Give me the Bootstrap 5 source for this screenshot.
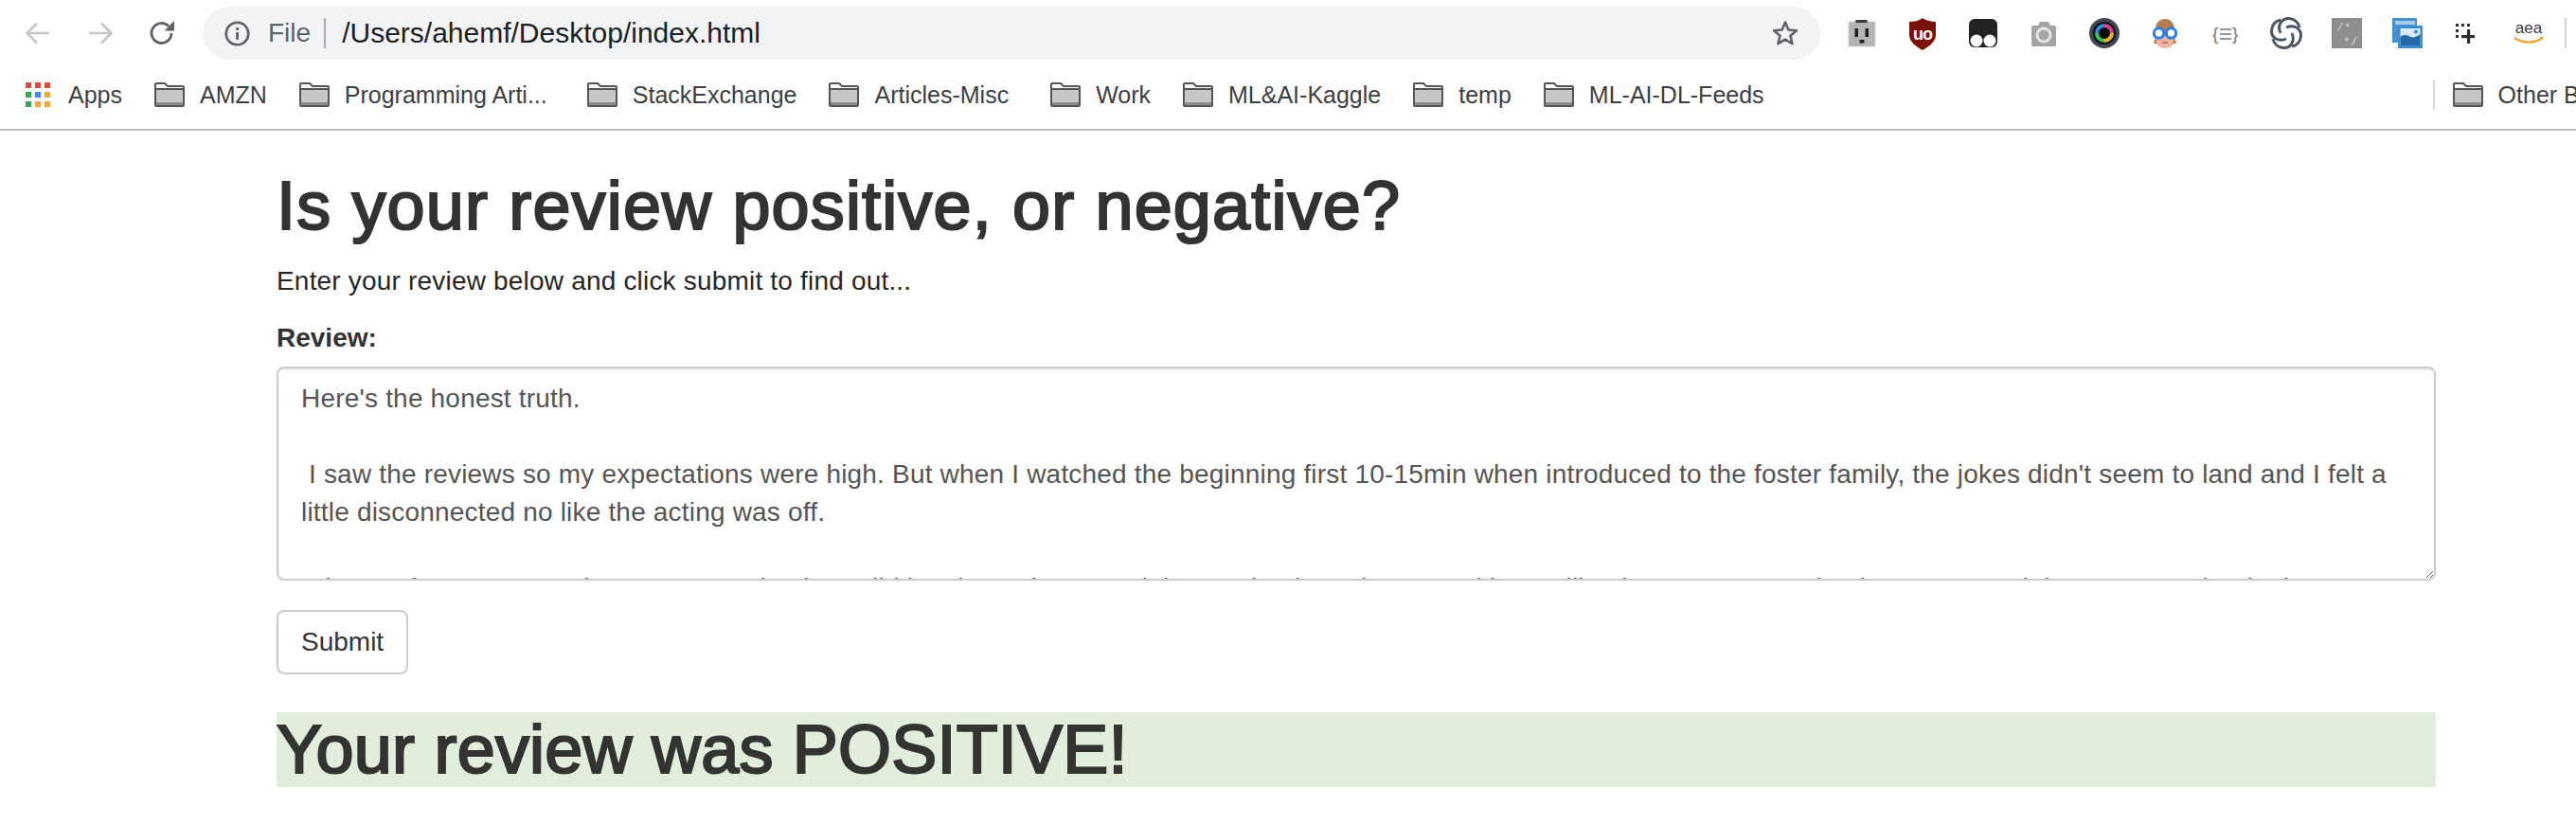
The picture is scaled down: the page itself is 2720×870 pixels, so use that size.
<!DOCTYPE html>
<html lang="en">
<head>
  <meta charset="UTF-8" />
  <title>Is your review positive, or negative?</title>
  <link href="https://cdn.jsdelivr.net/npm/bootstrap@5.3.2/dist/css/bootstrap.min.css" rel="stylesheet">
  <style>
    html, body { height: 870px; overflow: hidden; }
    body {
      background: #fff;
      color: #333;
      font-family: "Liberation Sans", Arial, sans-serif;
      font-size: 28px;
      line-height: 40px;
    }
    .chrome-top { height: 70px; padding-left: 26px; }
    .nav-ico { width: 28px; height: 28px; flex: none; }
    .nav-fwd { margin-left: 38px; }
    .nav-reload { margin-left: 37px; }
    .addr-bar {
      width: 1708px;
      height: 56px;
      margin-left: 29px;
      padding-left: 23px;
      padding-right: 22px;
      background: #f1f3f4;
      border-radius: 28px;
      flex: none;
      font-size: 30px;
      line-height: 56px;
    }
    .addr-file { color: #5f6368; font-size: 28px; margin-left: 19px; }
    .addr-sep { width: 2px; height: 32px; background: #a9abae; margin: 0 17px 0 14px; }
    .addr-path { color: #202124; }
    .ext-row { margin-left: 20px; gap: 16px; }
    .ext-ico { width: 48px; height: 48px; flex: none; }
    .ext-sep { width: 2px; height: 32px; background: #d4d4d4; margin-left: -2px; flex: none; }
    .bm-bar {
      height: 68px;
      padding-left: 27px;
      padding-bottom: 6px;
      border-bottom: 2px solid #bcbcbc;
      font-size: 25px;
      color: #3c4043;
      white-space: nowrap;
      overflow: hidden;
    }
    .bm-apps { width: 26px; height: 26px; margin-right: 19px; flex: none; }
    .bm-item { margin-left: 34px; flex: none; }
    .bm-after-elided { margin-left: 42px; }
    .bm-after-articles { margin-left: 44px; }
    .bm-folder { width: 32px; height: 26px; margin-right: 16px; flex: none; }
    .bm-apps-label { flex: none; }
    .bm-sep { width: 2px; height: 32px; background: #d9d9d9; margin-left: 706px; flex: none; }
    .bm-other { margin-left: 19px; }
    .page-col { width: 2340px; margin-left: 262px; padding: 0 30px; }
    .big-title {
      font-family: "Liberation Sans", Arial, sans-serif;
      font-size: 72px;
      font-weight: 400;
      line-height: 79px;
      color: #333;
      -webkit-text-stroke: 2.2px #333;
      margin: 40px 0 20px;
    }
    .title-main { letter-spacing: 1.15px; }
    .intro { margin: 0 0 20px; color: #262626; letter-spacing: .19px; }
    .review-label { font-weight: 700; margin-bottom: 10px; display: block; }
    .review-box {
      height: 226px;
      padding: 12px 24px;
      font-size: 28px;
      letter-spacing: .19px;
      line-height: 40px;
      color: #555;
      border: 2px solid #ccc;
      border-radius: 8px;
      box-shadow: inset 0 2px 2px rgba(0,0,0,.075);
      scrollbar-width: none;
    }
    .review-group { margin-bottom: 31px; }
    .submit-btn {
      font-size: 28px;
      line-height: 40px;
      padding: 12px 24px;
      color: #333;
      background: #fff;
      border: 2px solid #ccc;
      border-radius: 8px;
    }
    .result-good { background: #e1eedb; letter-spacing: .2px; }
  </style>
</head>
<body>
  <div class="chrome-top d-flex align-items-center">
    <svg class="nav-ico" viewBox="0 0 28 28" fill="none" stroke="#c4c6c9" stroke-width="2.6"><path d="M26 14H3M13 3.5 2.5 14 13 24.5"/></svg>
    <svg class="nav-ico nav-fwd" viewBox="0 0 28 28" fill="none" stroke="#c4c6c9" stroke-width="2.6"><path d="M2 14h23M15 3.5 25.500 14 15 24.500"/></svg>
    <svg class="nav-ico nav-reload" viewBox="0 0 28 28"><path d="M24 14a10.500 10.500 0 1 1-3-7.400" fill="none" stroke="#5f6368" stroke-width="2.800"/><path d="M27 1v10.500H16.500z" fill="#5f6368"/></svg>
    <div class="addr-bar d-flex align-items-center">
      <svg width="27" height="27" viewBox="0 0 27 27" class="flex-none"><circle cx="13.500" cy="13.500" r="11.800" fill="none" stroke="#5f6368" stroke-width="2.600"/><rect x="12.200" y="12" width="2.800" height="8" fill="#5f6368"/><rect x="12.200" y="7" width="2.800" height="3" fill="#5f6368"/></svg>
      <span class="addr-file">File</span>
      <span class="addr-sep"></span>
      <span class="addr-path">/Users/ahemf/Desktop/index.html</span>
      <svg class="ms-auto" width="30" height="30" viewBox="0 0 30 30"><path d="M15 3.500l3.400 8 8.600.700-6.500 5.600 2 8.400L15 21.700l-7.500 4.500 2-8.400L3 12.200l8.600-.700z" fill="none" stroke="#5f6368" stroke-width="2.600" stroke-linejoin="round"/></svg>
    </div>
    <div class="ext-row d-flex align-items-center">
      <!-- outlet -->
      <svg class="ext-ico" viewBox="0 0 48 48"><rect x="10" y="12" width="28" height="26" fill="#b4b4b4" stroke="#d0d0d0" stroke-width="1"/><rect x="17" y="10" width="13" height="3" rx="1.500" fill="#3a3a3a"/><rect x="16.500" y="19" width="3.500" height="9" fill="#1d1d1d"/><rect x="27.500" y="19" width="3.500" height="9" fill="#1d1d1d"/><rect x="21.500" y="31" width="5" height="3.500" fill="#1d1d1d"/></svg>
      <!-- ublock -->
      <svg class="ext-ico" viewBox="0 0 48 48"><path d="M24 8c4 3 9 4 14 4v14c0 7-7 12-14 16-7-4-14-9-14-16V12c5 0 10-1 14-4z" fill="#7b1208"/><text x="24" y="31" text-anchor="middle" font-family="Liberation Sans" font-weight="700" font-size="18" letter-spacing="-1" fill="#fff">uo</text></svg>
      <!-- tampermonkey -->
      <svg class="ext-ico" viewBox="0 0 48 48"><rect x="9" y="9" width="30" height="30" rx="6" fill="#222"/><circle cx="17" cy="32" r="6.500" fill="#fff"/><circle cx="31" cy="32" r="6.500" fill="#fff"/></svg>
      <!-- camera -->
      <svg class="ext-ico" viewBox="0 0 48 48"><path d="M11 18a2 2 0 0 1 2-2h5l2-4h9l2 4h4a2 2 0 0 1 2 2v18a2 2 0 0 1-2 2H13a2 2 0 0 1-2-2z" fill="#a4a4a4"/><circle cx="24" cy="26" r="7" fill="none" stroke="#e4e4e4" stroke-width="3"/></svg>
      <!-- lens -->
      <svg class="ext-ico" viewBox="0 0 48 48"><circle cx="24" cy="24" r="16" fill="#414752"/><circle cx="24" cy="24" r="12" fill="#111"/><g fill="none" stroke-width="4"><path d="M24 16a8 8 0 0 1 8 8" stroke="#d9408f"/><path d="M32 24a8 8 0 0 1-8 8" stroke="#e6b52c"/><path d="M24 32a8 8 0 0 1-8-8" stroke="#3cbf58"/><path d="M16 24a8 8 0 0 1 8-8" stroke="#2f8ee0"/></g><circle cx="24" cy="24" r="4" fill="#050505"/></svg>
      <!-- girl with goggles -->
      <svg class="ext-ico" viewBox="0 0 48 48"><path d="M12 35c2-4 2-9 2-14 0-8 4-12 10-12s10 4 10 12c0 5 0 10 2 14z" fill="#b07d55"/><path d="M15 26h18v6c0 5-4 8-9 8s-9-3-9-8z" fill="#eeb4a0"/><circle cx="17.500" cy="24" r="5.200" fill="#fff" stroke="#2f7fe0" stroke-width="3"/><circle cx="30.500" cy="24" r="5.200" fill="#fff" stroke="#2f7fe0" stroke-width="3"/><path d="M22 24h4" stroke="#2f7fe0" stroke-width="2"/><path d="M21 34h6" stroke="#a86b5c" stroke-width="1.500"/></svg>
      <!-- json formatter -->
      <svg class="ext-ico" viewBox="0 0 48 48"><text x="10" y="31" font-family="Liberation Sans" font-size="19" fill="#777">{</text><text x="31" y="31" font-family="Liberation Sans" font-size="19" fill="#777">}</text><path d="M18 20h12M18 25h12M18 30h12" stroke="#777" stroke-width="1.600"/></svg>
      <!-- spiral -->
      <svg class="ext-ico" viewBox="0 0 48 48" fill="none" stroke="#4b5663" stroke-width="3"><g id="blade"><path d="M18 24C14 15 20 8 27 8.500 33 9 37 13 38 18"/></g><use href="#blade" transform="rotate(90 24 24)"/><use href="#blade" transform="rotate(180 24 24)"/><use href="#blade" transform="rotate(270 24 24)"/></svg>
      <!-- comment block -->
      <svg class="ext-ico" viewBox="0 0 48 48"><rect x="8" y="8" width="32" height="32" fill="#8e8e8e"/><text x="13" y="22" font-family="Liberation Mono" font-size="13" fill="#d4d4d4">/*</text><text x="20" y="37" font-family="Liberation Mono" font-size="13" fill="#d4d4d4">*/</text></svg>
      <!-- image windows -->
      <svg class="ext-ico" viewBox="0 0 48 48"><rect x="8" y="8" width="26" height="26" fill="#4490d0"/><rect x="11" y="11" width="21" height="4" fill="#a9cdea"/><rect x="14" y="16" width="26" height="24" fill="#3a8dd0"/><rect x="16.500" y="19" width="21" height="18" fill="#d9e9f5"/><path d="M16.500 37v-9c5-4 8-1 11 0 3 1 6 0 10-3v12z" fill="#2468a8"/><circle cx="33" cy="22.500" r="2" fill="#3a8dd0"/></svg>
      <!-- plus with dots -->
      <svg class="ext-ico" viewBox="0 0 48 48"><g fill="#2c2c2c"><rect x="11" y="14" width="3" height="3"/><rect x="17" y="14" width="3" height="3"/><rect x="23" y="14" width="3" height="3"/><rect x="11" y="20" width="3" height="3"/><rect x="11" y="26" width="3" height="3"/><rect x="17" y="26" width="14" height="3.200"/><rect x="23" y="20" width="3.200" height="15"/></g></svg>
      <!-- aea amazon -->
      <svg class="ext-ico" viewBox="0 0 48 48"><text x="24" y="24" text-anchor="middle" font-family="Liberation Sans" font-size="17" fill="#333f48">aea</text><path d="M9 29c9 6 21 6 30 0" fill="none" stroke="#f0a030" stroke-width="2.200"/><path d="M39 28l-4-.500 3 4z" fill="#f0a030"/></svg>
      <span class="ext-sep"></span>
    </div>
  </div>

  <div class="bm-bar d-flex align-items-center">
    <svg class="bm-apps" viewBox="0 0 26 26"><g fill="#e04a3f"><rect x="0" y="0" width="6" height="6"/><rect x="10" y="0" width="6" height="6"/><rect x="20" y="0" width="6" height="6"/></g><rect x="0" y="10" width="6" height="6" fill="#34a853"/><rect x="10" y="10" width="6" height="6" fill="#4285f4"/><rect x="20" y="10" width="6" height="6" fill="#f0a63a"/><rect x="0" y="20" width="6" height="6" fill="#34a853"/><rect x="10" y="20" width="6" height="6" fill="#f0a63a"/><rect x="20" y="20" width="6" height="6" fill="#f0a63a"/></svg>
    <span class="bm-apps-label">Apps</span>
    <span class="bm-item d-flex align-items-center"><svg class="bm-folder" viewBox="0 0 32 26"><use href="#folder"/></svg>AMZN</span>
    <span class="bm-item d-flex align-items-center"><svg class="bm-folder" viewBox="0 0 32 26"><use href="#folder"/></svg>Programming Arti...</span>
    <span class="bm-item bm-after-elided d-flex align-items-center"><svg class="bm-folder" viewBox="0 0 32 26"><use href="#folder"/></svg>StackExchange</span>
    <span class="bm-item d-flex align-items-center"><svg class="bm-folder" viewBox="0 0 32 26"><use href="#folder"/></svg>Articles-Misc</span>
    <span class="bm-item bm-after-articles d-flex align-items-center"><svg class="bm-folder" viewBox="0 0 32 26"><use href="#folder"/></svg>Work</span>
    <span class="bm-item d-flex align-items-center"><svg class="bm-folder" viewBox="0 0 32 26"><use href="#folder"/></svg>ML&amp;AI-Kaggle</span>
    <span class="bm-item d-flex align-items-center"><svg class="bm-folder" viewBox="0 0 32 26"><use href="#folder"/></svg>temp</span>
    <span class="bm-item d-flex align-items-center"><svg class="bm-folder" viewBox="0 0 32 26"><use href="#folder"/></svg>ML-AI-DL-Feeds</span>
    <span class="bm-sep"></span>
    <span class="bm-item bm-other d-flex align-items-center"><svg class="bm-folder" viewBox="0 0 32 26"><use href="#folder"/></svg>Other Bookmarks</span>
  </div>

  <svg width="0" height="0" class="position-absolute">
    <symbol id="folder" viewBox="0 0 32 26">
      <path d="M1 24V2a1 1 0 0 1 1-1h9l3 3h16a1 1 0 0 1 1 1v19a1 1 0 0 1-1 1H2a1 1 0 0 1-1-1z" fill="#fff" stroke="#555" stroke-width="2"/>
      <rect x="2" y="8" width="28" height="16" fill="#c6c6c6"/>
      <rect x="2" y="6" width="28" height="2" fill="#555"/>
      <rect x="2" y="21" width="28" height="3" fill="#8c8c8c"/>
    </symbol>
  </svg>

  <div class="page-col">
    <h1 class="big-title title-main">Is your review positive, or negative?</h1>
    <p class="intro">Enter your review below and click submit to find out...</p>
    <form>
      <div class="review-group">
        <label class="review-label" for="review">Review:</label>
        <textarea class="form-control review-box" id="review">Here's the honest truth.

 I saw the reviews so my expectations were high. But when I watched the beginning first 10-15min when introduced to the foster family, the jokes didn't seem to land and I felt a little disconnected no like the acting was off.

 There a few moments that were amusing but I did laugh much. Yet as it kept going it got better and better like the actors started to loosen up and the story was beginning to make me smile and wonder of</textarea>
      </div>
      <button type="button" class="btn submit-btn">Submit</button>
    </form>
    <h1 class="big-title result-good">Your review was POSITIVE!</h1>
  </div>
</body>
</html>
